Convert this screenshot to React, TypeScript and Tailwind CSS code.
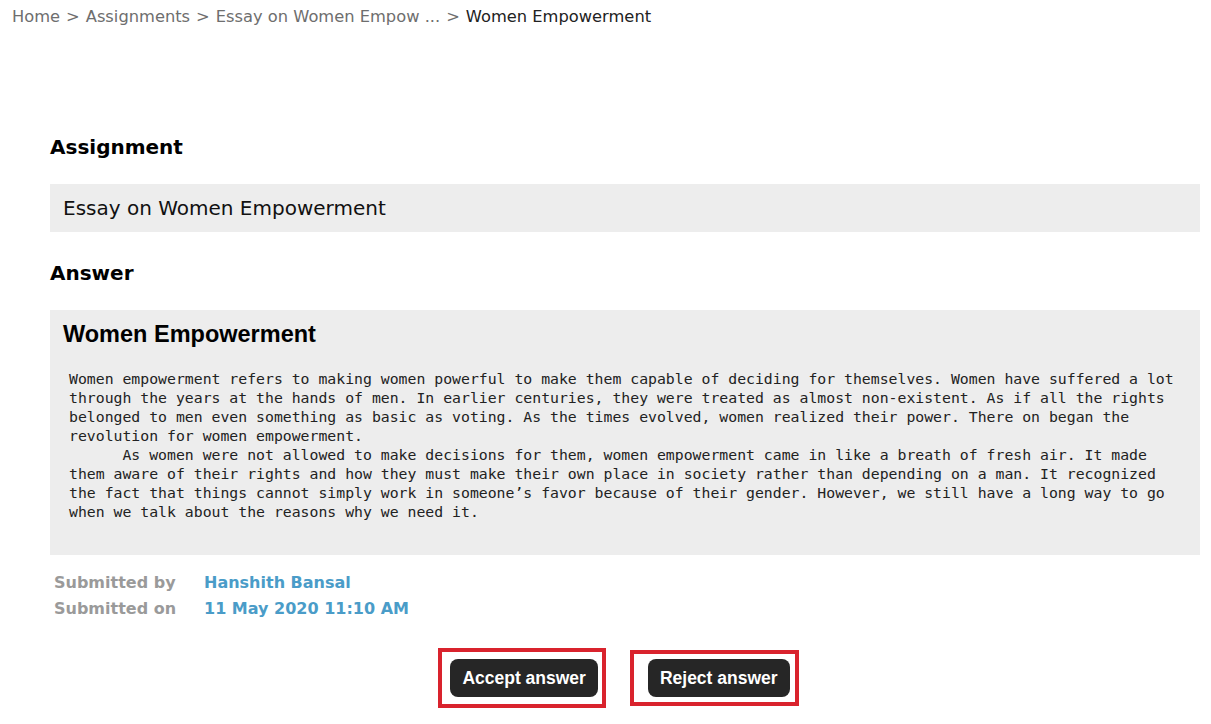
const essay = `Women empowerment refers to making women powerful to make them capable of deciding for themselves. Women have suffered a lot
through the years at the hands of men. In earlier centuries, they were treated as almost non-existent. As if all the rights
belonged to men even something as basic as voting. As the times evolved, women realized their power. There on began the
revolution for women empowerment.
      As women were not allowed to make decisions for them, women empowerment came in like a breath of fresh air. It made
them aware of their rights and how they must make their own place in society rather than depending on a man. It recognized
the fact that things cannot simply work in someone’s favor because of their gender. However, we still have a long way to go
when we talk about the reasons why we need it.`;

export default function App() {
    return (
        <div className="min-h-screen bg-white text-[#111] font-['DejaVu_Sans','Verdana',sans-serif]">
            {/* Breadcrumb */}
            <nav className="pl-[12px] pt-[5px] text-[16.3px] leading-[24px] text-[#6e6e6e]">
                <span>Home</span>
                <span className="mx-[6px]">&gt;</span>
                <span>Assignments</span>
                <span className="mx-[6px]">&gt;</span>
                <span>Essay on Women Empow ...</span>
                <span className="mx-[6px]">&gt;</span>
                <span className="text-[#222]">Women Empowerment</span>
            </nav>

            <main className="pl-[50px] pr-[11px] pt-[106px]">
                <h2 className="text-[20px] leading-[24px] font-bold text-black">Assignment</h2>
                <div className="mt-[25px] h-[48px] flex items-center px-[13px] bg-[#ededed] text-[20px] text-[#111]">
                    Essay on Women Empowerment
                </div>

                <h2 className="mt-[29px] text-[20px] leading-[24px] font-bold text-black">Answer</h2>
                <div className="mt-[25px] bg-[#ededed] pt-[11px] pb-[34px] px-[13px]">
                    <h3 className="text-[23.5px] leading-[27px] font-bold text-black font-['Liberation_Sans','Arial',sans-serif]">
                        Women Empowerment
                    </h3>
                    <pre className="mt-[21px] pl-[6px] text-[14.8px] leading-[19px] text-[#222] whitespace-pre font-['DejaVu_Sans_Mono','Consolas',monospace]">
                        {essay}
                    </pre>
                </div>

                {/* Submission meta */}
                <div className="mt-[15px] pl-[4px] text-[16px] leading-[26px] font-bold">
                    <div className="flex">
                        <span className="w-[150px] text-[#9a9a9a]">Submitted by</span>
                        <span className="text-[#4a9cc8]">Hanshith Bansal</span>
                    </div>
                    <div className="flex">
                        <span className="w-[150px] text-[#9a9a9a]">Submitted on</span>
                        <span className="text-[#4a9cc8]">11 May 2020 11:10 AM</span>
                    </div>
                </div>

                {/* Actions */}
                <div className="mt-[37px] pr-[10px] flex justify-center gap-[50px] font-['Liberation_Sans','Arial',sans-serif]">
                    <div className="relative">
                        <span className="absolute -left-[12px] -right-[8px] -top-[11px] -bottom-[11px] border-4 border-[#d9232d] pointer-events-none"></span>
                        <button className="h-[38px] px-[12px] rounded-[8px] bg-[#262626] text-white text-[17.5px] font-bold">
                            Accept answer
                        </button>
                    </div>
                    <div className="relative">
                        <span className="absolute -left-[18px] -right-[9px] -top-[9px] -bottom-[9px] border-4 border-[#d9232d] pointer-events-none"></span>
                        <button className="h-[38px] px-[12px] rounded-[8px] bg-[#262626] text-white text-[17.5px] font-bold">
                            Reject answer
                        </button>
                    </div>
                </div>
            </main>
        </div>
    );
}
